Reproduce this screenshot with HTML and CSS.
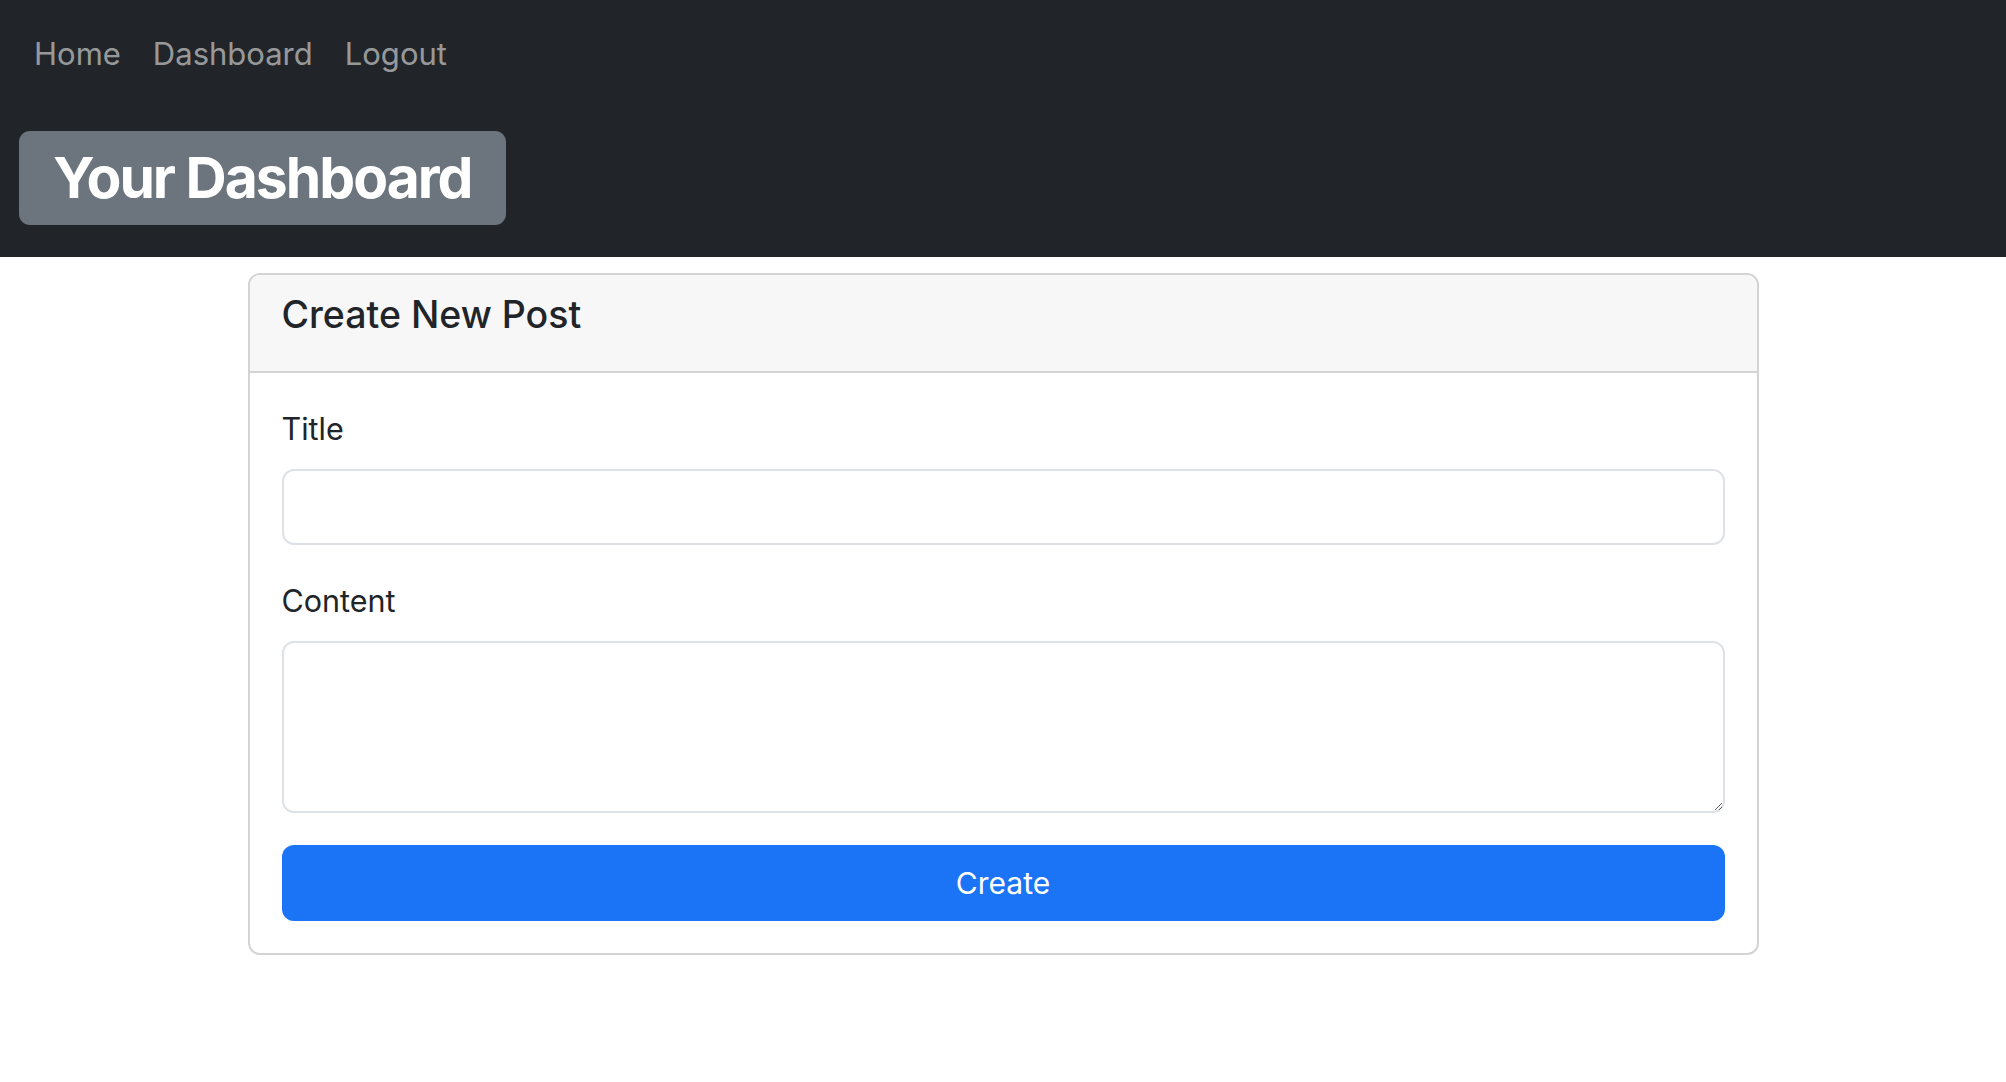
FILE: index.html
```html
<!DOCTYPE html>
<html lang="en">
<head>
<meta charset="utf-8">
<title>Your Dashboard</title>
<link rel="stylesheet" href="styles.css">
</head>
<body>
<header class="topbar">
  <nav class="nav">
    <a class="nav-link" href="#">Home</a>
    <a class="nav-link" href="#">Dashboard</a>
    <a class="nav-link" href="#">Logout</a>
  </nav>
  <div class="title-row">
    <h1 class="badge">Your Dashboard</h1>
  </div>
</header>
<main class="main">
  <section class="card">
    <div class="card-header">
      <h5 class="card-title">Create New Post</h5>
    </div>
    <form class="card-body">
      <div class="field">
        <label class="label" for="title">Title</label>
        <input class="control" id="title" type="text">
      </div>
      <div class="field">
        <label class="label" for="content">Content</label>
        <textarea class="control textarea" id="content" rows="3"></textarea>
      </div>
      <button class="btn" type="button">Create</button>
    </form>
  </section>
</main>
</body>
</html>
```

FILE: styles.css
```css
* { box-sizing: border-box; }

html, body {
  margin: 0;
  padding: 0;
  background: #ffffff;
  color: #212529;
  font-family: Inter, "Noto Sans", sans-serif;
}

.topbar {
  background: #212529;
  padding: 30px 0 32px 0;
}

.nav {
  display: flex;
  padding-left: 18px;
  height: 48px;
  align-items: center;
}

.nav-link {
  color: rgba(255, 255, 255, 0.55);
  text-decoration: none;
  font-size: 31px;
  line-height: 48px;
  padding: 0 16px;
}

.title-row {
  margin-top: 53px;
  padding-left: 19px;
}

.badge {
  display: inline-block;
  margin: 0;
  height: 94px;
  line-height: 94px;
  padding: 0 34px;
  background: #6c757d;
  color: #ffffff;
  font-size: 57px;
  font-weight: 700;
  letter-spacing: -2px;
  border-radius: 11px;
}

.main {
  padding-top: 16px;
}

.card {
  width: 1511px;
  margin: 0 auto;
  border: 2px solid #d3d3d4;
  border-radius: 12px;
  overflow: hidden;
}

.card-header {
  background: #f7f7f7;
  border-bottom: 2px solid #d3d3d4;
  padding: 16px 32px;
}

.card-title {
  margin: 0 0 16px 0;
  font-size: 37.5px;
  line-height: 48px;
  font-weight: 500;
  color: #212529;
}

.card-body {
  padding: 32px 32px 32px 32px;
  display: flex;
  flex-direction: column;
}

.field {
  display: flex;
  flex-direction: column;
  margin-bottom: 32px;
}

.label {
  font-size: 30.5px;
  line-height: 48px;
  margin-bottom: 16px;
}

.control {
  display: block;
  width: 100%;
  height: 76px;
  border: 2px solid #dee2e6;
  border-radius: 12px;
  padding: 12px 24px;
  font-family: inherit;
  font-size: 30px;
  line-height: 48px;
  color: #212529;
  background: #ffffff;
  outline: none;
}

.textarea {
  height: 172px;
  resize: vertical;
}

.btn {
  display: block;
  width: 100%;
  height: 76px;
  border: none;
  border-radius: 12px;
  background: #1b74f6;
  color: #ffffff;
  font-family: inherit;
  font-size: 30px;
  line-height: 48px;
  cursor: pointer;
}
```
